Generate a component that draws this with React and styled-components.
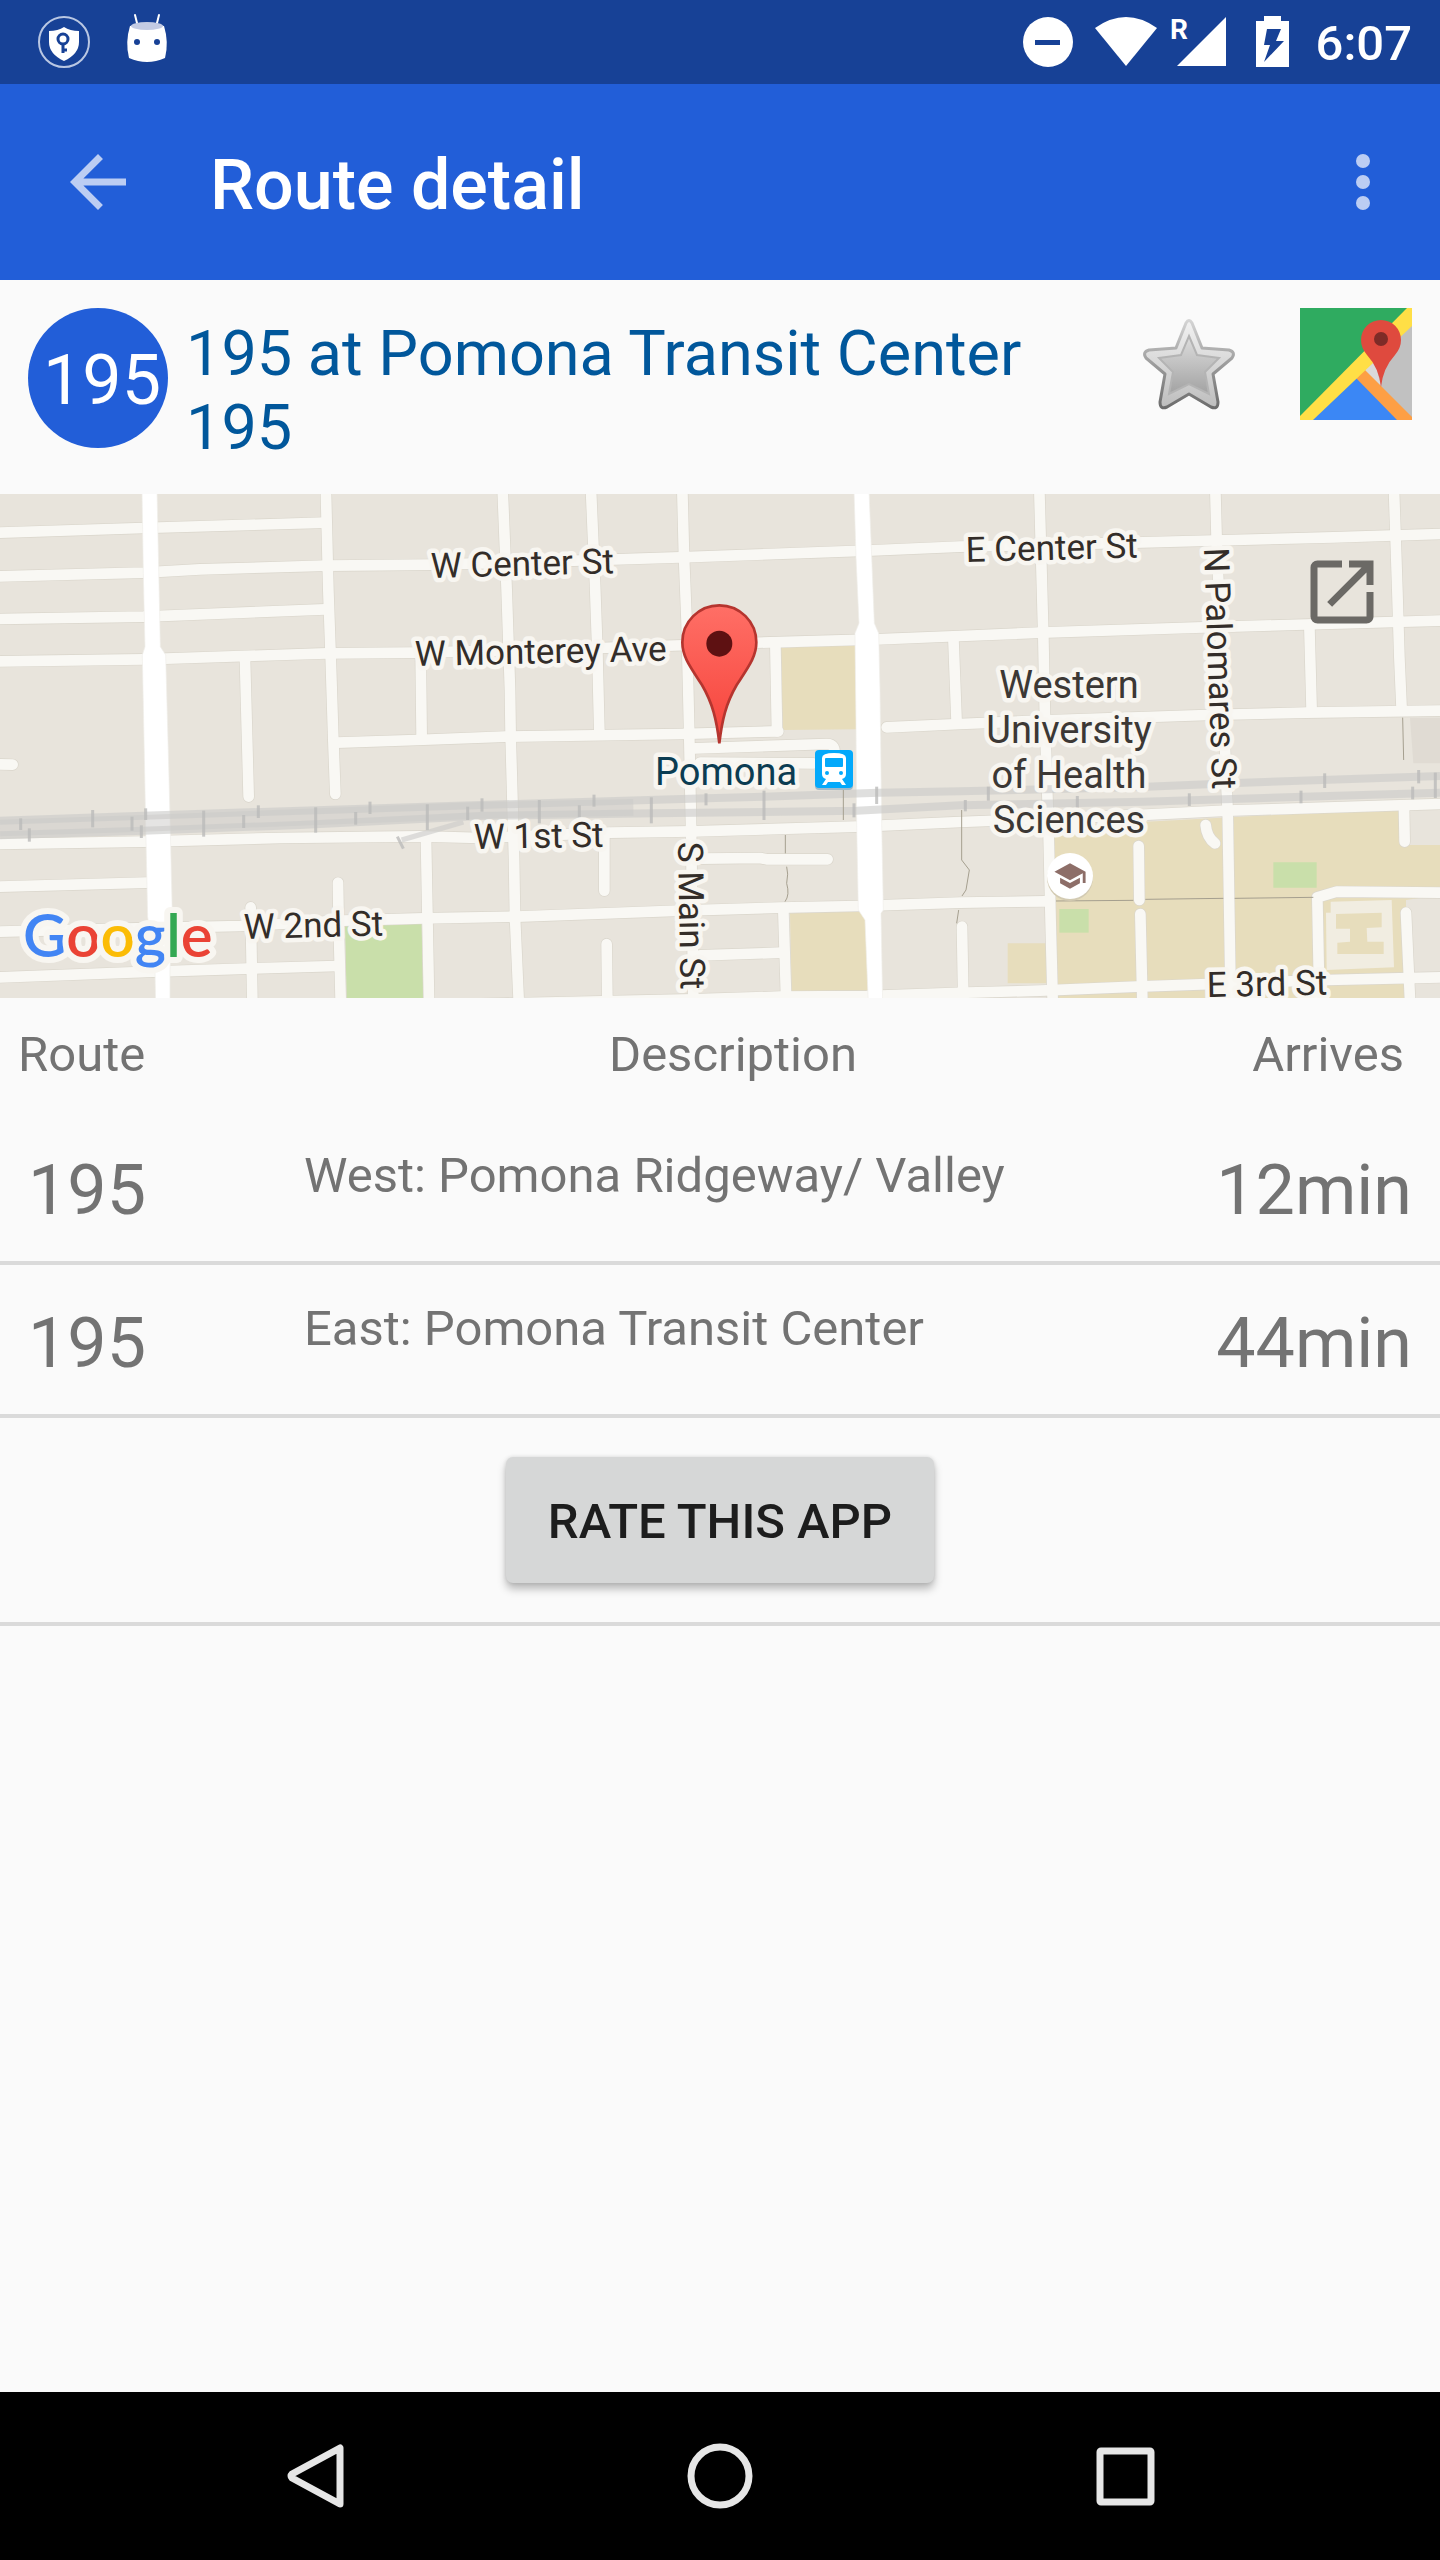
import React from 'react'
import styled, { createGlobalStyle } from 'styled-components'
import { MdArrowBack, MdOpenInNew, MdSchool } from 'react-icons/md'

const arrivals = [
    { id: 1, route: '195', description: 'West: Pomona Ridgeway/ Valley', arrives: '12min' },
    { id: 2, route: '195', description: 'East: Pomona Transit Center', arrives: '44min' },
];

// Street geometry, drawn on a 4320 x 1512 grid
const streets = [
    'M0 128 L430 114 L975 98',
    'M0 259 L430 248 L600 238 L980 227 L1300 224 L1600 216 L2040 202 L2600 182 L2880 170 L3400 158 L4000 142 L4320 132',
    'M0 387 L430 380 L975 358',
    'M0 514 L430 508 L980 490 L1250 488 L1800 474 L2310 457 L2630 448 L2880 438 L3120 428 L3610 412 L4180 396 L4320 392',
    'M1010 758 L1250 750 L1515 740 L2040 732 L2335 724',
    'M2085 775 L2480 762 Q2510 762 2502 800',
    'M2100 818 L2440 820',
    'M2660 712 L2880 702 L3120 692 L3620 675 L3920 668 L4320 662',
    'M0 1062 L430 1055 L840 1044 L1260 1039 L1440 1044 L1830 1028 L2080 1024 L2570 1010 L2880 996 L3440 974 L3680 962 L4320 942',
    'M0 1190 L440 1178',
    'M0 1325 L440 1314 L720 1308 L1030 1292 L1270 1285 L1550 1280 L2040 1262 L2340 1253 L2575 1248 L2880 1238 L3135 1234',
    'M0 1462 L460 1445 L740 1436 L1010 1428',
    'M1440 1542 L2080 1528 L2340 1520 L2600 1518 L2900 1508 L3120 1502 L3410 1490 L3980 1470 L4320 1462',
    'M2100 1396 L2345 1388',
    'M2100 1106 L2280 1104 L2300 1108 L2483 1108',
    'M0 823 L38 824',
    'M978 12 L985 300 L992 500 L1000 750 L1006 912',
    'M735 510 L746 920',
    'M1262 490 L1265 745',
    'M1508 0 L1520 300 L1530 600 L1532 740 L1542 1100 L1545 1280 L1556 1530',
    'M1773 0 L1785 280 L1792 480 L1798 725',
    'M2047 0 L2052 200 L2060 400 L2067 700 L2073 1000 L2080 1530',
    'M2326 460 L2331 724',
    'M2860 440 L2870 700',
    'M1813 1040 L1813 1202',
    'M1820 1362 L1822 1530',
    'M2350 1260 L2358 1515',
    'M1278 1045 L1287 1530',
    'M1014 1178 L1016 1300 L1022 1530',
    'M752 1252 L757 1530',
    'M3118 0 L3130 440 L3135 690 L3146 1040 L3152 1300 L3158 1530',
    'M3646 0 L3650 150 L3680 900 L3683 960 L3692 1530',
    'M4182 0 L4192 300 L4198 500 L4205 660',
    'M3928 405 L3935 665',
    'M3416 1068 L3418 1230',
    'M3421 1272 L3427 1530',
    'M3617 1005 Q3620 1042 3645 1060',
    'M4212 950 L4214 1055',
    'M4218 1268 L4230 1530',
    'M4320 1208 L4010 1205 L3952 1222 L3958 1530',
    'M2886 1310 L2890 1530',
];

const railTracks = [
    'M0 992 L430 977 L1440 945 L2120 925 L2290 920 L2635 908 L2880 904 L3440 890 L3730 878 L4320 858',
    'M0 1036 L430 1022 L900 1005 L1440 978 L1960 970 L2570 962 L2880 946 L3430 935 L3910 920 L4320 908',
];

const railTies = [
    [62, 985, 1020], [88, 1015, 1055], [278, 960, 1012], [396, 980, 1022], [437, 955, 990], [424, 1006, 1044],
    [611, 962, 1040], [731, 975, 1014], [775, 946, 984], [947, 952, 1028], [1067, 966, 1004], [1110, 935, 972],
    [1282, 943, 1020], [1403, 950, 990], [1446, 925, 965], [1618, 930, 1000], [1738, 946, 982], [1782, 914, 950],
    [1954, 922, 1000], [2118, 910, 946], [2292, 902, 990], [2562, 940, 982], [2630, 890, 942], [2896, 930, 964],
    [2965, 890, 932], [3232, 918, 956], [3568, 910, 948], [3903, 902, 940], [3974, 850, 894], [4238, 890, 928],
    [4256, 840, 880], [4306, 848, 924],
];

const StatusBar = () => {
    return (
        <StatusBarContainer>
            <StatusSide>
                <svg width="84" height="84" viewBox="0 0 84 84" aria-hidden="true">
                    <circle cx="43" cy="42" r="25" fill="none" stroke="#b9c7e3" strokeWidth="2" />
                    <path d="M43 27 Q49 31 58 31 V42 Q58 54 43 61 Q28 54 28 42 V31 Q37 31 43 27Z" fill="#fff" />
                    <circle cx="42" cy="39" r="5" fill="none" stroke="#174196" strokeWidth="3" />
                    <path d="M42 44 V53 M43 50 H46" stroke="#174196" strokeWidth="3" />
                </svg>
                <svg width="84" height="84" viewBox="0 0 84 84" aria-hidden="true">
                    <path d="M30 15 L33 27 M54 15 L51 27" stroke="#fff" strokeWidth="2" strokeLinecap="round" />
                    <path d="M25 26 Q42 21 59 26 Q64 42 60 58 Q42 66 24 58 Q20 42 25 26Z" fill="#fff" />
                    <ellipse cx="42" cy="26" rx="16" ry="4" fill="#c3cbe4" />
                    <circle cx="32" cy="42" r="3" fill="#174196" />
                    <circle cx="52" cy="42" r="3" fill="#174196" />
                </svg>
            </StatusSide>
            <StatusSide>
                <svg width="292" height="84" viewBox="0 0 292 84" aria-hidden="true">
                    <circle cx="36" cy="42" r="25" fill="#fff" />
                    <rect x="23" y="40" width="25" height="5" fill="#174196" />
                    <path d="M83 28 Q114 6 145 28 L114 66Z" fill="#fff" />
                    <text x="158" y="39" fontFamily="Roboto" fontWeight="700" fontSize="28" fill="#fff">R</text>
                    <path d="M214 17 V66 H165Z" fill="#fff" />
                    <path d="M252 16 H269 V21 H277 V67 H244 V21 H252Z" fill="#fff" />
                    <path d="M255 29 H269 L264 41 H272 L252 62 L258 45 H252Z" fill="#174196" />
                </svg>
                <Clock>6:07</Clock>
            </StatusSide>
        </StatusBarContainer>
    )
}

const StarIcon = () => {
    return (
        <svg width="112" height="112" viewBox="-1 0 112 112" aria-hidden="true">
            <defs>
                <linearGradient id="starRim" x1="0" y1="0" x2="0" y2="1">
                    <stop offset="0" stopColor="#f2f2f2" />
                    <stop offset="1" stopColor="#bdbdbd" />
                </linearGradient>
                <linearGradient id="starEdge" x1="0" y1="0" x2="0" y2="1">
                    <stop offset="0" stopColor="#d4d4d4" />
                    <stop offset="0.5" stopColor="#9c9c9c" />
                    <stop offset="1" stopColor="#6c6c6c" />
                </linearGradient>
                <linearGradient id="starCore" x1="0" y1="0" x2="0" y2="1">
                    <stop offset="0" stopColor="#dedede" />
                    <stop offset="1" stopColor="#a2a2a2" />
                </linearGradient>
            </defs>
            <path
                d="M53 15 Q56 10 59 15 L69 40 L96 42 Q103 44 99 50 L80 66 L85 94 Q85 102 78 99 L56 86 L34 99 Q27 102 27 94 L32 66 L13 50 Q9 44 16 42 L43 40Z"
                fill="url(#starRim)"
                stroke="url(#starEdge)"
                strokeWidth="3"
                strokeLinejoin="round"
            />
            <path
                d="M56 28 L64 47 L86 50 L72 64 L76 86 L56 76 L36 86 L40 64 L26 50 L48 47Z"
                fill="url(#starCore)"
                stroke="#b4b4b4"
                strokeWidth="2"
            />
        </svg>
    )
}

const MapsIcon = () => {
    return (
        <svg width="112" height="112" viewBox="0 0 112 112" aria-hidden="true">
            <rect width="112" height="112" fill="#c1c1c1" />
            <path d="M0 0 H112 L0 112Z" fill="#2fab60" />
            <path d="M62 60 L81 78 L74 50Z" fill="#dadada" />
            <path d="M56 69 L98 112 H12Z" fill="#3b87f5" />
            <path d="M56 70 L64 61 L112 109 V112 H97Z" fill="#fd9f45" />
            <path d="M0 112 V108 L107 0 H112 V18 L13 112Z" fill="#ffdf46" />
            <path d="M81 79 Q79 60 67 47 Q61 40 61 32 A20 20 0 0 1 101 32 Q101 40 95 47 Q83 60 81 79Z" fill="#df4a3e" />
            <circle cx="81" cy="31" r="7" fill="#7e2b27" />
        </svg>
    )
}

const StreetMap = () => {
    return (
        <MapDrawing viewBox="0 0 1440 504" role="img" aria-label="Map of Pomona">
            <defs>
                <linearGradient id="pinFill" x1="0" y1="0" x2="0" y2="1">
                    <stop offset="0" stopColor="#ff6f66" />
                    <stop offset="1" stopColor="#f6423a" />
                </linearGradient>
            </defs>
            <rect width="1440" height="504" fill="#e8e4dc" />
            <g transform="translate(0 -4) scale(0.333333)" fill="none">
                <g fill="#e7ddbc">
                    <path d="M2343 473 L2565 463 L2570 718 L2348 720Z" />
                    <path d="M2370 1270 L2580 1262 L2605 1300 V1505 H2375Z" />
                    <path d="M3160 1010 L4200 955 V1065 H4320 V1215 L4218 1230 V1480 L4240 1490 V1524 H3165Z" />
                    <path d="M3023 1360 H3140 V1480 H3023Z" />
                </g>
                <g fill="#c9dfaa">
                    <path d="M1035 1305 L1265 1300 L1270 1524 H1040Z" />
                    <path d="M3820 1117 H3950 V1193 H3820Z" />
                    <path d="M3178 1257 H3266 V1328 H3178Z" />
                </g>
                <path d="M4230 683 H4320 V820 H4240Z" fill="#e0dbd3" />
                <path d="M3992 1235 L4175 1230 L4182 1432 L3980 1440 L3978 1268 H3992Z" fill="#f1ede1" />
                <path
                    d="M4008 1272 L4145 1268 V1312 L4100 1314 L4102 1355 H4151 V1392 H4012 V1358 L4050 1355 V1316 H4008Z"
                    fill="#e7ddbc"
                />
                <g stroke="#dad6cc" strokeWidth="36" strokeLinecap="round" strokeLinejoin="round">
                    {streets.map((d, i) => <path key={`edge${i}`} d={d} />)}
                </g>
                <g stroke="#f9f8f4" strokeWidth="32" strokeLinecap="round" strokeLinejoin="round">
                    {streets.map((d, i) => <path key={`street${i}`} d={d} />)}
                </g>
                <g fill="#fff" stroke="#f0eeea" strokeWidth="2">
                    <path d="M426 0 L430 250 L435 470 L427 495 L437 1000 L443 1280 L465 1440 L467 1540 H510 V1440 L517 1280 L508 900 L497 495 L481 470 L471 0Z" />
                    <path d="M2562 0 L2568 200 L2577 400 L2565 430 L2568 700 L2570 1000 L2575 1260 L2595 1290 L2605 1540 H2648 L2643 1270 L2650 1260 L2645 1000 L2640 600 L2636 430 L2623 400 L2607 0Z" />
                </g>
                <path d="M0 1014 L430 1000 L1440 961 L1900 952" stroke="#cbcac7" strokeWidth="50" opacity="0.5" />
                <g stroke="#cbcbc9" strokeWidth="24" opacity="0.6">
                    {railTracks.map((d, i) => <path key={`rail${i}`} d={d} />)}
                    <path d="M1205 1050 L1390 996" strokeWidth="16" />
                </g>
                <g stroke="#bcbcbb" strokeWidth="9" opacity="0.8">
                    {railTies.map(([x, y1, y2]) => <path key={`tie${x}`} d={`M${x} ${y1} V${y2}`} />)}
                    <path d="M1192 1040 L1210 1076" />
                </g>
                <g stroke="#a59f8f" strokeWidth="3">
                    <path d="M2530 895 V990 M2356 1035 V1090 M2360 1130 Q2366 1150 2360 1180 Q2370 1215 2355 1235" />
                    <path d="M2885 960 V1110 L2908 1140 L2898 1200 L2886 1218 M2876 1260 L2870 1300" />
                    <path d="M3168 1233 L3400 1231 M3436 1228 L3670 1225 M3704 1225 L3940 1222 M4208 683 L4211 810" />
                </g>
                <g>
                    <path
                        d="M2158 760 C2150 690 2138 640 2106 585 C2070 530 2047 500 2047 457 A111 111 0 0 1 2269 457 C2269 500 2246 530 2210 585 C2178 640 2166 690 2158 760Z"
                        fill="url(#pinFill)"
                        stroke="#b5352f"
                        strokeWidth="8"
                    />
                    <circle cx="2158" cy="461" r="39" fill="#5e1112" />
                </g>
            </g>
            <MapLabel x="431" y="84" transform="rotate(-1.5 431 84)">W Center St</MapLabel>
            <MapLabel x="415" y="172" transform="rotate(-1.2 415 172)">W Monterey Ave</MapLabel>
            <MapLabel x="966" y="68" transform="rotate(-1.5 966 68)">E Center St</MapLabel>
            <MapLabel x="474" y="355" transform="rotate(-1 474 355)">W 1st St</MapLabel>
            <MapLabel x="244" y="445" transform="rotate(-1.5 244 445)">W 2nd St</MapLabel>
            <MapLabel x="1207" y="503" transform="rotate(-1.2 1207 503)">E 3rd St</MapLabel>
            <MapLabel x="678" y="348" transform="rotate(89 678 348)">S Main St</MapLabel>
            <MapLabel x="1204" y="54" transform="rotate(88 1204 54)">N Palomares St</MapLabel>
            <MapLabel x="655" y="291" $place $color="#0b3c52">Pomona</MapLabel>
            <MapLabel textAnchor="middle" $place $color="#3c3835">
                <tspan x="1069" y="204">Western</tspan>
                <tspan x="1069" y="249">University</tspan>
                <tspan x="1069" y="294">of Health</tspan>
                <tspan x="1069" y="339">Sciences</tspan>
            </MapLabel>
            <rect x="815" y="257" width="38" height="39" rx="4" fill="#9fb9c9" />
            <rect x="815" y="256" width="38" height="38" rx="4" fill="#03a9fb" />
            <path d="M822 264 Q822 259 834 259 Q846 259 846 264 V280 Q846 284 842 285 L846 291 H842 L840 288 H828 L826 291 H822 L826 285 Q822 284 822 280Z" fill="#fff" />
            <rect x="825" y="264" width="18" height="9" rx="1" fill="#03a9fb" />
            <circle cx="827" cy="279" r="2" fill="#03a9fb" />
            <circle cx="841" cy="279" r="2" fill="#03a9fb" />
            <circle cx="1070" cy="384" r="23" fill="#d3cbb3" />
            <circle cx="1070" cy="382" r="23" fill="#fff" />
            <MdSchool x="1053" y="365" size={34} color="#8d6e68" />
            <Logo x="23" y="463">
                <tspan fill="#4285f4">G</tspan>
                <tspan fill="#ea4335">o</tspan>
                <tspan fill="#fbbc05">o</tspan>
                <tspan fill="#4285f4">g</tspan>
                <tspan fill="#34a853">l</tspan>
                <tspan fill="#ea4335">e</tspan>
            </Logo>
        </MapDrawing>
    )
}

const App = () => {
    return (
        <Page>
            <GlobalStyle />
            <StatusBar />

            <Toolbar>
                <IconButton aria-label="Back">
                    <MdArrowBack size={84} />
                </IconButton>
                <ToolbarTitle>Route detail</ToolbarTitle>
                <IconButton aria-label="More options">
                    <svg width="84" height="84" viewBox="0 0 24 24" fill="currentColor" aria-hidden="true">
                        <circle cx="12" cy="6" r="2" />
                        <circle cx="12" cy="12" r="2" />
                        <circle cx="12" cy="18" r="2" />
                    </svg>
                </IconButton>
            </Toolbar>

            <main>
                <StopHeader>
                    <RouteBadge>195</RouteBadge>
                    <StopTitle>195 at Pomona Transit Center 195</StopTitle>
                    <StopActions>
                        <IconButton aria-label="Add to favourites"><StarIcon /></IconButton>
                        <IconButton aria-label="Open in maps"><MapsIcon /></IconButton>
                    </StopActions>
                </StopHeader>

                <MapContainer>
                    <StreetMap />
                    <OpenMapButton aria-label="Open full map">
                        <MdOpenInNew size={84} />
                    </OpenMapButton>
                </MapContainer>

                <ArrivalsTable>
                    <thead>
                        <tr>
                            <HeadCell $width="304px" $align="left">Route</HeadCell>
                            <HeadCell $align="center">Description</HeadCell>
                            <HeadCell $width="278px" $align="right">Arrives</HeadCell>
                        </tr>
                    </thead>
                    <tbody>
                        {arrivals.map((a) => {
                            return (
                                <tr key={a.id}>
                                    <BigCell>{a.route}</BigCell>
                                    <DescriptionCell>{a.description}</DescriptionCell>
                                    <BigCell $align="right">{a.arrives}</BigCell>
                                </tr>
                            )
                        })}
                    </tbody>
                </ArrivalsTable>

                <RateRow>
                    <RateButton>RATE THIS APP</RateButton>
                </RateRow>
            </main>

            <NavBar>
                <NavButton aria-label="Back">
                    <svg width="84" height="84" viewBox="0 0 84 84" fill="none" stroke="#e6e6e6" strokeWidth="7" strokeLinejoin="round">
                        <path d="M65 14 V70 L17 44 Q15 42 17 40Z" />
                    </svg>
                </NavButton>
                <NavButton aria-label="Home">
                    <svg width="84" height="84" viewBox="0 0 84 84" fill="none" stroke="#e6e6e6" strokeWidth="7">
                        <circle cx="42" cy="42" r="29" />
                    </svg>
                </NavButton>
                <NavButton aria-label="Recent apps">
                    <svg width="84" height="84" viewBox="0 0 84 84" fill="none" stroke="#e6e6e6" strokeWidth="7">
                        <rect x="19" y="17" width="51" height="51" rx="1" />
                    </svg>
                </NavButton>
            </NavBar>
        </Page>
    )
}

export default App

const GlobalStyle = createGlobalStyle`
    * {
        box-sizing: border-box;
    }
    body {
        margin: 0;
        background: #fafafa;
        color: #737373;
        font-family: Roboto, "Noto Sans", sans-serif;
    }
    button {
        border: 0;
        padding: 0;
        background: none;
        font-family: inherit;
    }
    svg {
        display: block;
        flex: none;
    }
`;

const Page = styled.div`
    display: flex;
    flex-direction: column;
    min-height: 100vh;

    main {
        flex: 1;
    }
`;

const StatusBarContainer = styled.div`
    display: flex;
    justify-content: space-between;
    height: 84px;
    padding: 0 28px 0 21px;
    background: #174196;
`;
const StatusSide = styled.div`
    display: flex;
    align-items: center;
`;
const Clock = styled.time`
    margin-left: 12px;
    padding-top: 4px;
    color: #fff;
    font-size: 49px;
    font-weight: 500;
    line-height: 58px;
`;

const Toolbar = styled.header`
    display: flex;
    align-items: center;
    height: 196px;
    padding: 0 35px 0 56px;
    background: #225ed8;
    color: #bccdf3;
`;
const ToolbarTitle = styled.h1`
    flex: 1;
    margin: 0;
    padding: 6px 0 0 70px;
    color: #fff;
    font-size: 70px;
    font-weight: 500;
    line-height: 82px;
`;
const IconButton = styled.button`
    display: flex;
    color: inherit;
`;

const StopHeader = styled.section`
    display: flex;
    align-items: flex-start;
    gap: 18px;
    padding: 28px;
`;
const RouteBadge = styled.div`
    display: flex;
    flex: none;
    align-items: center;
    justify-content: center;
    width: 140px;
    height: 140px;
    padding: 4px 0 0 8px;
    border-radius: 50%;
    background: #225ed8;
    color: #fff;
    font-size: 70px;
    line-height: 82px;
`;
const StopTitle = styled.h2`
    flex: 1;
    margin: 0;
    padding: 9px 0 1px;
    color: #01579b;
    font-size: 63px;
    font-weight: 400;
    line-height: 74px;
`;
const StopActions = styled.div`
    display: flex;
    gap: 56px;
`;

const MapContainer = styled.section`
    position: relative;
`;
const MapDrawing = styled.svg`
    width: 100%;
    height: auto;
`;
const MapLabel = styled.text`
    fill: ${({ $color }) => $color || '#332d29'};
    stroke: #f8f6f1;
    stroke-width: 9px;
    stroke-linejoin: round;
    paint-order: stroke;
    font-size: ${({ $place }) => $place ? '38px' : '35px'};
`;
const Logo = styled.text`
    stroke: #f8f6f1;
    stroke-width: 12px;
    stroke-linejoin: round;
    paint-order: stroke;
    font-family: Lato, sans-serif;
    font-size: 60px;
    font-weight: 600;
`;
const OpenMapButton = styled.button`
    position: absolute;
    top: 56px;
    right: 56px;
    color: #6b6965;
`;

const ArrivalsTable = styled.table`
    width: 100%;
    table-layout: fixed;
    border-spacing: 0;
`;
const HeadCell = styled.th`
    width: ${({ $width }) => $width || 'auto'};
    padding: 28px ${({ $align }) => $align === 'right' ? '36px' : '0'} 28px ${({ $align }) => $align === 'left' ? '18px' : '0'};
    font-size: 49px;
    font-weight: 400;
    line-height: 58px;
    text-align: ${({ $align }) => $align};
`;
const Cell = styled.td`
    padding: 0;
    border-bottom: 4px solid #dadada;
    vertical-align: top;
`;
const BigCell = styled(Cell)`
    padding: 37px 28px 30px;
    font-size: 70px;
    line-height: 82px;
    text-align: ${({ $align }) => $align || 'left'};
`;
const DescriptionCell = styled(Cell)`
    padding-top: 35px;
    font-size: 49px;
    line-height: 58px;
`;

const RateRow = styled.div`
    display: flex;
    justify-content: center;
    padding: 39px 28px;
    border-bottom: 4px solid #dadada;
`;
const RateButton = styled.button`
    height: 126px;
    padding: 2px 42px 0;
    border-radius: 7px;
    background: #d6d7d7;
    box-shadow: 0 6px 8px rgba(0, 0, 0, 0.26), 0 0 4px rgba(0, 0, 0, 0.12);
    color: #1d1d1d;
    font-size: 49px;
    font-weight: 500;
`;

const NavBar = styled.nav`
    display: grid;
    grid-template-columns: repeat(3, 28%);
    justify-content: center;
    height: 168px;
    background: #000;
`;
const NavButton = styled.button`
    display: flex;
    align-items: center;
    justify-content: center;
`;
